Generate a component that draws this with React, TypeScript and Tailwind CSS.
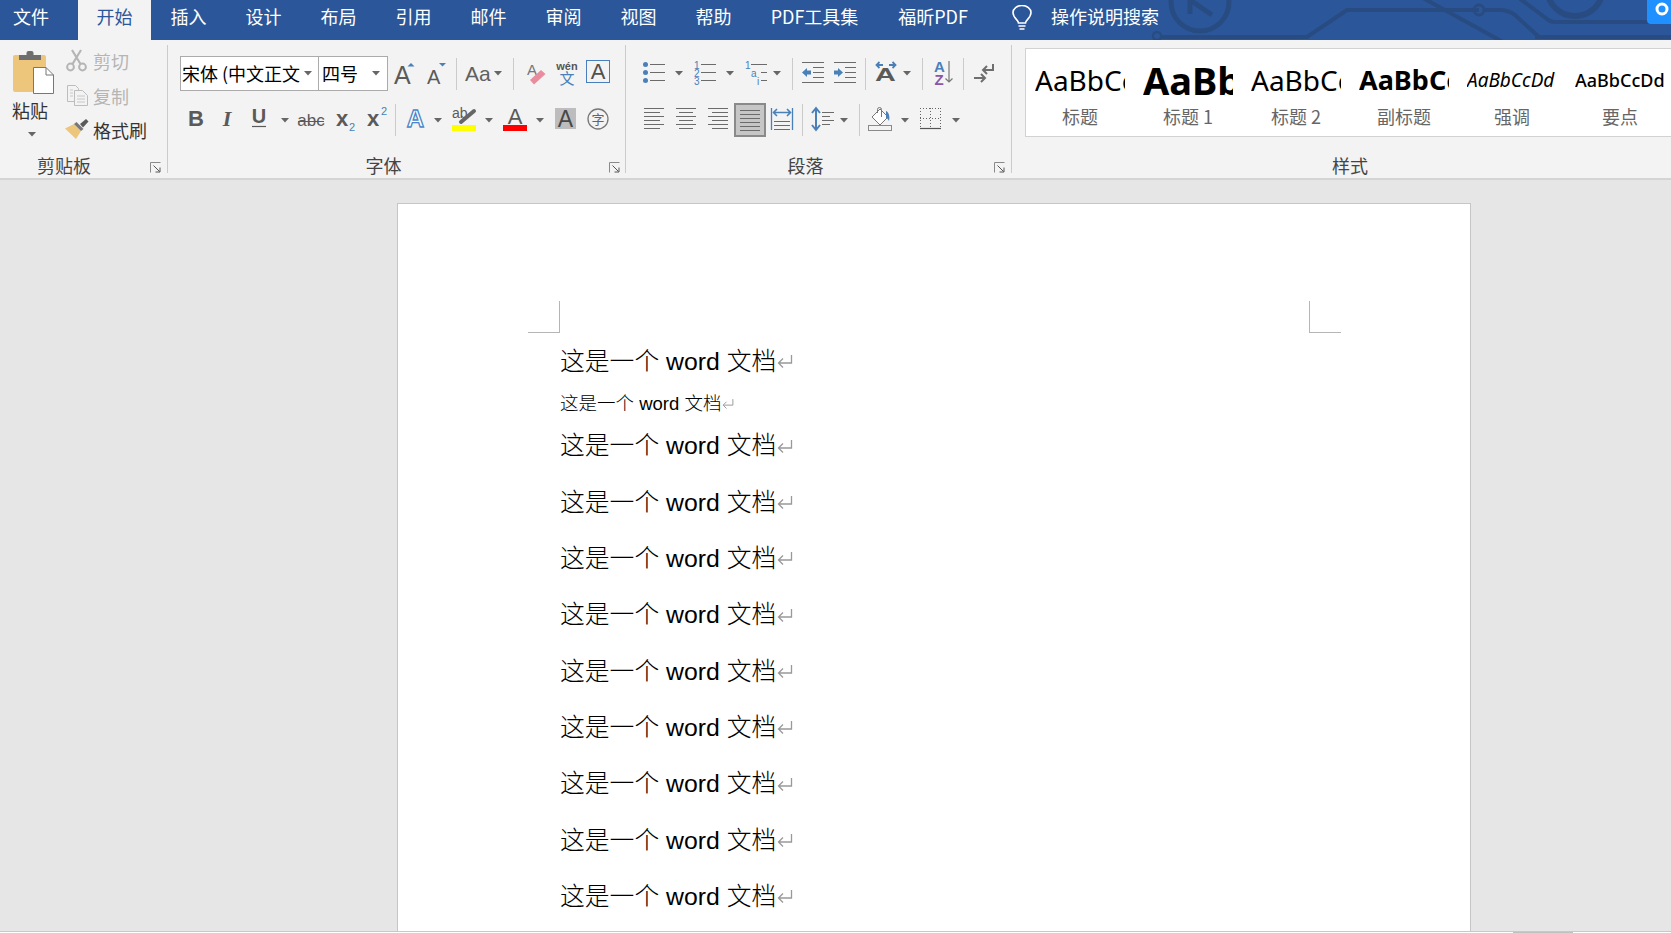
import type { ReactNode } from "react";

const GRAY = "#5a5a5a";
const LINE = "#6b6b6b";
const BLUE = "#4a80b8";
const SANS = "Liberation Sans";
const SERIF = "Liberation Serif";
const CJK = "Noto Sans CJK SC";

const tabs: [string, string][] = [
  ["插入", "w-[75px]"],
  ["设计", "w-[75px]"],
  ["布局", "w-[75px]"],
  ["引用", "w-[75px]"],
  ["邮件", "w-[75px]"],
  ["审阅", "w-[75px]"],
  ["视图", "w-[75px]"],
  ["帮助", "w-[75px]"],
  ["PDF工具集", "w-[127px]"],
  ["福昕PDF", "w-[110px]"],
];

const Ico = ({ w, h = 24, className = "", children }: { w: number; h?: number; className?: string; children: ReactNode }) => (
  <svg width={w} height={h} viewBox={`0 0 ${w} ${h}`} fontFamily={SANS} className={`shrink-0 overflow-visible ${className}`}>
    {children}
  </svg>
);

const Caret = ({ className = "" }: { className?: string }) => (
  <svg width={8} height={5} viewBox="0 0 8 5" className={`shrink-0 ${className}`}>
    <path d="M0 0h8L4 4.5z" fill="#666" />
  </svg>
);

const Sep = ({ className = "" }: { className?: string }) => <div className={`h-[32px] w-px shrink-0 bg-[#cbcbcb] ${className}`} />;

const Launcher = ({ className = "" }: { className?: string }) => (
  <svg width={11} height={11} viewBox="0 0 11 11" className={`absolute bottom-[5px] ${className}`}>
    <path d="M.5 10.5V.5h10" fill="none" stroke="#8a8a8a" />
    <path d="M3.5 3.5l6 6M10 5.5v4.5H5.5" fill="none" stroke="#555" />
  </svg>
);

const HLines = ({ rows }: { rows: [number, number, number][] }) => (
  <>
    {rows.map(([y, a, b], i) => (
      <path key={i} d={`M${a} ${y}H${b}`} stroke={LINE} strokeWidth={1} />
    ))}
  </>
);

const Paste = () => (
  <svg width={42} height={44} viewBox="0 0 42 44" className="ml-[13px] shrink-0">
    <rect x={0} y={4} width={33} height={37} rx={2} fill="#edc67c" />
    <rect x={6} y={4} width={22} height={5} fill="#6e6e6e" />
    <rect x={13.5} y={0} width={7} height={6} rx={2} fill="#6e6e6e" />
    <path d="M20.5 16.5H33L40.5 24V42.5H20.5z" fill="#fff" stroke="#777" />
    <path d="M33 16.5V24H40.5" fill="none" stroke="#777" />
  </svg>
);

const Scissors = () => (
  <svg width={21} height={23} viewBox="0 0 21 23" className="shrink-0 -translate-x-[1px]">
    <circle cx={4.5} cy={18} r={3.4} fill="none" stroke="#b5b5b5" strokeWidth={2} />
    <circle cx={16.5} cy={18} r={3.4} fill="none" stroke="#b5b5b5" strokeWidth={2} />
    <path d="M6.5 15L15 1M14.5 15L6 1" stroke="#b5b5b5" strokeWidth={2.2} />
  </svg>
);

const CopyIcon = () => (
  <svg width={21} height={21} viewBox="0 0 21 21" className="shrink-0">
    <path d="M.5.5h8l3 3V5M7.5 16.5h-7V.5" fill="none" stroke="#bdbdbd" />
    <path d="M7.5 5.5h8l5 5v10h-13z" fill="#f3f3f3" stroke="#bdbdbd" />
    <path d="M10 11h8M10 14h8M10 17h8M3 5h3M3 8h3M3 11h3" stroke="#c8c8c8" />
  </svg>
);

const Brush = () => (
  <svg width={24} height={24} viewBox="0 0 24 24" className="shrink-0">
    <path d="M0 10.5L9 6l7 7-5 8z" fill="#edc67c" />
    <path d="M9 6l2.5-2 7 7-2.5 2z" fill="#777" />
    <path d="M15 6l6-5 2.5 2.5-5.5 6z" fill="#5a5a5a" />
  </svg>
);

const ReturnMark = ({ small = false }: { small?: boolean }) => (
  <svg width={small ? 12 : 16} height={small ? 10 : 13} viewBox="0 0 16 13" className="ml-[1px] shrink-0">
    <path d="M14.5 0v8H2M6 3.5L1.5 8 6 12.5" fill="none" stroke="#999" strokeWidth={1.3} />
  </svg>
);

const StyleItem = ({ label, className, sample }: { label: string; className: string; sample: string }) => (
  <div className="flex w-[90px] shrink-0 flex-col">
    <div className={`flex h-[55px] items-center overflow-hidden whitespace-nowrap pt-[7px] font-['Noto_Sans',sans-serif] text-black ${className}`}>{sample}</div>
    <div className="flex h-[24px] items-center justify-center text-[18px] leading-none text-[#666]">{label}</div>
  </div>
);

const DocLine = ({ small = false }: { small?: boolean }) => (
  <p
    className={`flex items-center whitespace-pre font-['Liberation_Sans','Noto_Sans_CJK_SC',sans-serif] font-light text-black ${
      small ? "h-[28.5px] text-[18.5px]" : "h-[56.35px] text-[24.8px]"
    }`}
  >
    这是一个 word 文档
    <ReturnMark small={small} />
  </p>
);

export default function App() {
  return (
    <div className="flex h-[933px] w-[1671px] flex-col overflow-hidden bg-[#e6e6e6] font-['Noto_Sans_CJK_SC',sans-serif]">
      {/* title tabs */}
      <div className="relative flex h-[40px] shrink-0 items-center bg-[#2b579a] text-[18px] text-white">
        <svg width={521} height={40} viewBox="1150 0 521 40" className="absolute right-0 top-0" fill="none" stroke="#284c82">
          <circle cx={1200} cy={2} r={29} strokeWidth={5} />
          <path d="M1190 0v14M1190 0l22 15" strokeWidth={5} />
          <circle cx={1157} cy={36} r={4} strokeWidth={2.5} />
          <path d="M1161 37h146l40-27h132M1485 10h15q8 0 15 5l25 23" strokeWidth={4} />
          <circle cx={1479} cy={10} r={5} strokeWidth={3} />
          <path d="M1423 -2l80 44M1515 -5l32 24q3 3 8 3h95M1535 37h136" strokeWidth={4} />
          <circle cx={1575} cy={-12} r={28} strokeWidth={6} />
          <path d="M1647 0h24v24h-20a4 4 0 0 1-4-4z" fill="#1e90ff" stroke="none" />
          <circle cx={1662} cy={9} r={5} stroke="#fff" strokeWidth={3} />
        </svg>
        <div className="relative flex h-full w-[78px] items-center pb-[7px] pl-[13px]">文件</div>
        <div className="relative flex h-full w-[73px] items-center justify-center bg-[#f3f3f3] pb-[7px] text-[#2b579a]">开始</div>
        {tabs.map(([t, w]) => (
          <div key={t} className={`relative flex h-full items-center justify-center pb-[7px] ${w}`}>
            {t}
          </div>
        ))}
        <svg width={20} height={25} viewBox="0 0 20 25" className="relative mb-[6px] ml-[24px] shrink-0" fill="none" stroke="#fff" strokeWidth={1.6}>
          <path d="M6.5 18c0-3-5.5-5-5.5-10.5a9 7 0 0 1 18 0C19 13 13.500 15 13.500 18z" />
          <path d="M6.500 21h7M7.500 24h5" />
        </svg>
        <span className="relative mb-[7px] ml-[19px]">操作说明搜索</span>
      </div>

      {/* ribbon */}
      <div className="flex h-[138px] shrink-0 bg-[#f3f3f3] text-[#444]">
        {/* clipboard */}
        <div className="relative flex w-[167px] shrink-0 flex-col">
          <div className="flex flex-1">
            <div className="flex w-[67px] flex-col pt-[11px]">
              <Paste />
              <div className="ml-[12px] mt-[2px] text-[18px] leading-[26px] text-[#333]">粘贴</div>
              <Caret className="ml-[28px] mt-[9px]" />
            </div>
            <div className="flex flex-col text-[18px] leading-none">
              <div className="mt-[9px] flex h-[23px] items-center text-[#b5b5b5]">
                <Scissors />
                <span className="ml-[5px] mt-[1px]">剪切</span>
              </div>
              <div className="mt-[13px] flex h-[21px] items-center text-[#b5b5b5]">
                <CopyIcon />
                <span className="ml-[5px]">复制</span>
              </div>
              <div className="mt-[12px] flex h-[24px] -translate-x-[2px] items-center text-[#333]">
                <Brush />
                <span className="ml-[4px]">格式刷</span>
              </div>
            </div>
          </div>
          <div className="flex h-[26px] items-center justify-center pr-[39px] text-[18px] leading-none">剪贴板</div>
          <Launcher className="right-[6px]" />
        </div>
        <Sep className="my-[5px] !h-auto" />

        {/* font */}
        <div className="relative flex w-[457px] shrink-0 flex-col">
          <div className="mt-[16px] flex h-[35px] items-center">
            <div className="ml-[12px] flex h-[35px] w-[139px] shrink-0 items-center justify-between border-[1.5px] border-[#ababab] bg-white pl-[1px] pr-[6px] text-[18px] text-black">
              <span className="whitespace-pre">宋体 (中文正文</span>
              <Caret />
            </div>
            <div className="-ml-[1px] flex h-[35px] w-[70px] shrink-0 items-center justify-between border-[1.5px] border-[#ababab] bg-white pl-[3px] pr-[7px] text-[18px] text-black">
              <span>四号</span>
              <Caret />
            </div>
            <Ico w={21} className="ml-[6px]">
              <text x={0} y={22} fontSize={25} fill={GRAY}>A</text>
              <path d="M13.500 4.500h7L17 1z" fill={BLUE} />
            </Ico>
            <Ico w={20} className="ml-[12px]">
              <text x={0} y={22} fontSize={20} fill={GRAY}>A</text>
              <path d="M12 1h7l-3.500 3.500z" fill={BLUE} />
            </Ico>
            <Sep className="ml-[9px]" />
            <span className="ml-[8px] w-[25px] shrink-0 whitespace-nowrap font-['Liberation_Sans',sans-serif] text-[21px] text-[#606060]">Aa</span>
            <Caret className="ml-[4px]" />
            <Sep className="ml-[11px]" />
            <Ico w={21} className="ml-[12px]">
              <text x={1} y={13} fontSize={15} fill="#777">A</text>
              <path d="M4 18L15 8l4.500 4L8 22.500z" fill="#e98c9d" />
            </Ico>
            <Ico w={22} className="ml-[9px]">
              <text x={11} y={8} fontSize={11} fontWeight={700} fill="#555" textAnchor="middle">wén</text>
              <text x={11} y={22} fontSize={15} fill={BLUE} textAnchor="middle" fontFamily={CJK}>文</text>
            </Ico>
            <div className="mb-[4px] ml-[8px] flex h-[23px] w-[24px] shrink-0 items-center justify-center border border-[#4a7ebb] font-['Liberation_Sans',sans-serif] text-[22px] leading-none text-[#505050]">A</div>
          </div>
          <div className="mt-[12px] flex h-[34px] items-center">
            <Ico w={20} className="ml-[18px]">
              <text x={10} y={18} fontSize={22} fontWeight={700} fill={GRAY} textAnchor="middle">B</text>
            </Ico>
            <Ico w={20} className="ml-[11px]">
              <text x={10} y={18} fontSize={22} fontStyle="italic" fontWeight={700} fontFamily={SERIF} fill={GRAY} textAnchor="middle">I</text>
            </Ico>
            <Ico w={20} className="ml-[12px]">
              <text x={10} y={15} fontSize={20} fontWeight={700} fill={GRAY} textAnchor="middle">U</text>
              <path d="M3 18.500h14" stroke={GRAY} strokeWidth={1.200} />
            </Ico>
            <Caret className="ml-[12px]" />
            <Ico w={28} className="ml-[8px]">
              <text x={14} y={18} fontSize={17} fill={GRAY} textAnchor="middle">abc</text>
              <path d="M1 13.500h26" stroke={GRAY} />
            </Ico>
            <Ico w={22} className="ml-[9px]">
              <text x={2} y={18} fontSize={22} fontWeight={700} fill={GRAY}>x</text>
              <text x={15} y={23} fontSize={11} fill={BLUE}>2</text>
            </Ico>
            <Ico w={21} className="ml-[11px]">
              <text x={0} y={18} fontSize={22} fontWeight={700} fill={GRAY}>x</text>
              <text x={14} y={7} fontSize={11} fill={BLUE}>2</text>
            </Ico>
            <Sep className="ml-[7px]" />
            <Ico w={19} className="ml-[10px]">
              <text x={9.500} y={19} fontSize={24} fontWeight={700} fill="#fff" stroke="#4a86c8" strokeWidth={1.300} textAnchor="middle">A</text>
            </Ico>
            <Caret className="ml-[9px]" />
            <Ico w={24} className="ml-[10px]">
              <text x={0} y={10} fontSize={14} fill={GRAY}>ab</text>
              <path d="M22 3L9 14" stroke="#666" strokeWidth={4} strokeLinecap="round" />
              <rect x={0} y={17} width={24} height={6} fill="#ffff00" />
            </Ico>
            <Caret className="ml-[9px]" />
            <Ico w={24} className="ml-[10px]">
              <text x={12} y={16} fontSize={22} fill={GRAY} textAnchor="middle">A</text>
              <rect x={0} y={17} width={24} height={6} fill="#ff0000" />
            </Ico>
            <Caret className="ml-[9px]" />
            <Ico w={21} className="ml-[11px]">
              <rect x={0} y={0} width={21} height={21} fill="#bdbdbd" />
              <text x={10.500} y={19} fontSize={23} fill="#484848" textAnchor="middle">A</text>
            </Ico>
            <Ico w={22} className="ml-[11px]">
              <circle cx={11} cy={11} r={10} fill="none" stroke="#777" strokeWidth={1.300} />
              <text x={11} y={16} fontSize={13} fill="#666" textAnchor="middle" fontFamily={CJK}>字</text>
            </Ico>
          </div>
          <div className="mt-auto flex h-[26px] items-center justify-center pr-[26px] text-[18px] leading-none">字体</div>
          <Launcher className="right-[5px]" />
        </div>
        <Sep className="my-[5px] !h-auto" />

        {/* paragraph */}
        <div className="relative flex w-[385px] shrink-0 flex-col">
          <div className="mt-[20px] flex h-[24px] items-center">
            <Ico w={22} className="ml-[17px]">
              <circle cx={2.500} cy={4.500} r={2.500} fill={BLUE} />
              <circle cx={2.500} cy={12.500} r={2.500} fill={BLUE} />
              <circle cx={2.500} cy={20.500} r={2.500} fill={BLUE} />
              <HLines rows={[[4.500, 7, 22], [12.500, 7, 22], [20.500, 7, 22]]} />
            </Ico>
            <Caret className="ml-[10px] mt-[3px]" />
            <Ico w={22} className="ml-[11px]">
              <text x={0} y={8.500} fontSize={10} fill={BLUE}>1</text>
              <text x={0} y={16.500} fontSize={10} fill={BLUE}>2</text>
              <text x={0} y={24.500} fontSize={10} fill={BLUE}>3</text>
              <HLines rows={[[4.500, 7, 22], [12.500, 7, 22], [20.500, 7, 22]]} />
            </Ico>
            <Caret className="ml-[10px] mt-[3px]" />
            <Ico w={22} className="ml-[11px]">
              <text x={0} y={8.500} fontSize={10} fill={BLUE}>1</text>
              <text x={6} y={16.500} fontSize={10} fill={BLUE}>a</text>
              <text x={12} y={24.500} fontSize={10} fill={BLUE}>i</text>
              <HLines rows={[[4.500, 6, 22], [12.500, 16, 22], [20.500, 16, 22]]} />
            </Ico>
            <Caret className="ml-[6px] mt-[3px]" />
            <Sep className="ml-[11px] mt-[4px]" />
            <Ico w={22} className="ml-[9px]">
              <HLines rows={[[2.500, 0, 22], [7.500, 11, 22], [12.500, 11, 22], [17.500, 11, 22], [22.500, 0, 22]]} />
              <path d="M0 12.500L5 8v2.500h4v4H5V17z" fill={BLUE} />
            </Ico>
            <Ico w={22} className="ml-[10px]">
              <HLines rows={[[2.500, 0, 22], [7.500, 11, 22], [12.500, 11, 22], [17.500, 11, 22], [22.500, 0, 22]]} />
              <path d="M9 12.500L4 8v2.500H0v4h4V17z" fill={BLUE} />
            </Ico>
            <Sep className="ml-[9px] mt-[4px]" />
            <Ico w={22} className="ml-[9px]">
              <text x={0} y={21} fontSize={18} fontWeight={700} fill={GRAY} transform="scale(1.6 1)">A</text>
              <path d="M8 5H2M4.500 2L1.500 5l3 3M14 5h6M17.500 2l3 3-3 3" fill="none" stroke={BLUE} strokeWidth={1.800} />
            </Ico>
            <Caret className="ml-[6px] mt-[3px]" />
            <Sep className="ml-[11px] mt-[4px]" />
            <Ico w={19} className="ml-[11px]">
              <text x={0} y={12} fontSize={15} fontWeight={700} fill={BLUE}>A</text>
              <text x={0.500} y={24.500} fontSize={15} fontWeight={700} fill="#8a56a8">Z</text>
              <path d="M15 1v21M11.500 18.500L15 22l3.500-3.500" fill="none" stroke="#777" strokeWidth={1.200} />
            </Ico>
            <Sep className="ml-[10px] mt-[4px]" />
            <Ico w={20} className="ml-[10px]">
              <path d="M19 4v6H9M13 6l-4 4 4 4M0 18h11M7 14l4 4-4 4" fill="none" stroke="#6e6e6e" strokeWidth={2} />
            </Ico>
          </div>
          <div className="mt-[19px] flex h-[34px] items-center">
            <Ico w={20} className="ml-[18px]">
              <HLines rows={[[.5, 0, 20], [4.500, 0, 16], [8.500, 0, 20], [12.500, 0, 16], [16.500, 0, 20], [20.500, 0, 16]]} />
            </Ico>
            <Ico w={20} className="ml-[12px]">
              <HLines rows={[[.5, 0, 20], [4.500, 3, 17], [8.500, 0, 20], [12.500, 3, 17], [16.500, 0, 20], [20.500, 3, 17]]} />
            </Ico>
            <Ico w={20} className="ml-[12px]">
              <HLines rows={[[.5, 0, 20], [4.500, 4, 20], [8.500, 0, 20], [12.500, 4, 20], [16.500, 0, 20], [20.500, 4, 20]]} />
            </Ico>
            <div className="ml-[6px] flex h-[34px] w-[32px] shrink-0 items-center justify-center border-2 border-[#8a8a8a] bg-[#c6c6c6]">
              <Ico w={20} h={21}>
                <HLines rows={[[.5, 0, 20], [4.500, 0, 20], [8.500, 0, 20], [12.500, 0, 20], [16.500, 0, 20], [20.500, 0, 20]]} />
              </Ico>
            </div>
            <Ico w={24} className="ml-[4px]">
              <path d="M1.500 0v22M22.500 0v22" stroke={BLUE} strokeWidth={1.300} />
              <path d="M3 4.500h18M7 1L3.500 4.500 7 8M17 1l3.500 3.500L17 8" fill="none" stroke={BLUE} strokeWidth={1.600} />
              <HLines rows={[[13.500, 4, 20], [17.500, 4, 20], [21.500, 4, 20]]} />
            </Ico>
            <Sep className="ml-[8px]" />
            <Ico w={22} className="ml-[9px]">
              <path d="M4 1v20M0 5l4-5 4 5M0 17l4 5 4-5" fill="none" stroke={BLUE} strokeWidth={2} />
              <HLines rows={[[4.500, 10, 22], [8.500, 10, 18], [12.500, 10, 22], [16.500, 10, 18]]} />
            </Ico>
            <Caret className="ml-[6px]" />
            <Sep className="ml-[11px]" />
            <Ico w={24} className="ml-[8px]">
              <path d="M12 1l8 8-8 8-8-8z" fill="#fff" stroke="#777" />
              <path d="M9.500 5V1.500a2 2 0 0 1 4 0V9" fill="none" stroke="#777" />
              <path d="M18 3c3 1 4 6 3 10-1-2-2-3-3-3z" fill={BLUE} />
              <rect x={.5} y={17.500} width={23} height={5} fill="#f3f3f3" stroke="#8a8a8a" />
            </Ico>
            <Caret className="ml-[9px]" />
            <Ico w={21} className="ml-[11px]">
              <path d="M.5 0v20M10.500 0v20M20.500 0v20M0 .5h21M0 10.500h21" stroke="#666" strokeDasharray="1 2" fill="none" />
              <path d="M0 20.500h21" stroke="#555" strokeWidth={1.200} />
            </Ico>
            <Caret className="ml-[11px]" />
          </div>
          <div className="mt-auto flex h-[26px] items-center justify-center pr-[26px] text-[18px] leading-none">段落</div>
          <Launcher className="right-[6px]" />
        </div>
        <Sep className="my-[5px] !h-auto" />

        {/* styles */}
        <div className="flex min-w-0 flex-1 flex-col">
          <div className="ml-[13px] mt-[8px] flex h-[89px] gap-[18px] border-y-[1.5px] border-l-[1.5px] border-[#d2d2d2] bg-white pl-[9px]">
            <StyleItem label="标题" className="text-[28px]" sample="AaBbCc" />
            <StyleItem label="标题 1" className="text-[38px] font-bold" sample="AaBbC" />
            <StyleItem label="标题 2" className="text-[28px]" sample="AaBbCc" />
            <StyleItem label="副标题" className="text-[27px] font-bold" sample="AaBbCc" />
            <StyleItem label="强调" className="text-[19px] italic" sample="AaBbCcDd" />
            <StyleItem label="要点" className="text-[18px] font-medium" sample="AaBbCcDd" />
          </div>
          <div className="mt-auto flex h-[26px] items-center justify-center pl-[17px] text-[18px] leading-none">样式</div>
        </div>
      </div>
      <div className="h-[2px] shrink-0 bg-[#d4d4d4]" />

      {/* document canvas */}
      <div className="flex min-h-0 flex-1 pt-[23px]">
        <div className="ml-[397px] flex w-[1074px] shrink-0 flex-col border-x border-t border-[#c6c6c6] bg-white">
          <div className="flex justify-between pl-[130px] pr-[129px] pt-[97px]">
            <div className="h-[32px] w-[32px] border-b border-r border-[#b5b5b5]" />
            <div className="h-[32px] w-[32px] border-b border-l border-[#b5b5b5]" />
          </div>
          <div className="pl-[162px]">
            <DocLine />
            <DocLine small />
            <DocLine />
            <DocLine />
            <DocLine />
            <DocLine />
            <DocLine />
            <DocLine />
            <DocLine />
            <DocLine />
            <DocLine />
          </div>
        </div>
      </div>
      <div className="h-[2px] shrink-0 border-t border-[#c8c8c8] bg-white">
        <div className="ml-[1513px] h-full w-[60px] bg-[#c0c0c0]" />
      </div>
    </div>
  );
}
